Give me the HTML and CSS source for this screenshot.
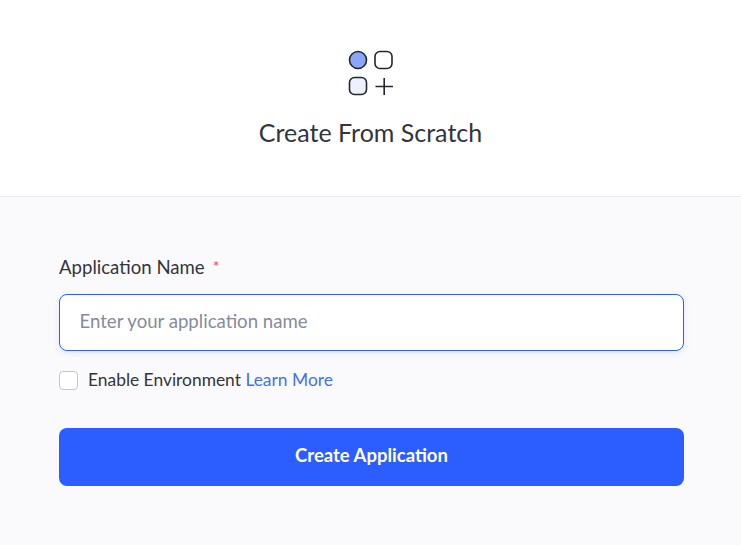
FILE: index.html
```html
<!DOCTYPE html>
<html lang="en">
<head>
<meta charset="utf-8">
<title>Create From Scratch</title>
<link rel="stylesheet" href="styles.css">
</head>
<body>
<header class="head">
  <svg class="logo" width="46" height="46" viewBox="0 0 46 46" aria-hidden="true">
    <circle cx="10" cy="10" r="8.5" fill="#8aa6fb" stroke="#25272d" stroke-width="1.6"/>
    <rect x="27" y="1.5" width="17" height="17" rx="5" fill="#fff" stroke="#25272d" stroke-width="1.6"/>
    <rect x="1.5" y="27.5" width="17" height="17" rx="5" fill="#eef1fd" stroke="#25272d" stroke-width="1.6"/>
    <path d="M27.5 36.5H45M36.2 28V45" fill="none" stroke="#25272d" stroke-width="1.6"/>
  </svg>
  <h1 class="title">Create From Scratch</h1>
</header>
<main class="form">
  <label class="label" for="app">Application Name<span class="req">*</span></label>
  <input class="input" id="app" type="text" placeholder="Enter your application name">
  <div class="check-row">
    <span class="box"></span>
    <span class="check-text">Enable Environment <a class="link" href="#">Learn More</a></span>
  </div>
  <button class="btn" type="button">Create Application</button>
</main>
</body>
</html>
```
FILE: styles.css
```css
* { box-sizing: border-box; }
html, body { margin: 0; height: 100%; }
body {
  font-family: Lato, "Open Sans", sans-serif;
  background: #fafafd;
  color: #33353b;
  overflow: hidden;
}
.head {
  height: 197px;
  background: #fff;
  border-bottom: 1px solid #ecedf1;
  padding-top: 50px;
  display: flex;
  flex-direction: column;
  align-items: center;
}
.logo { display: block; }
.title {
  margin: 20px 0 0;
  font-size: 25px;
  line-height: 32px;
  font-weight: 400;
}
.form {
  padding: 58px 57px 0 59px;
  display: flex;
  flex-direction: column;
}
.label {
  font-size: 18.6px;
  line-height: 24px;
}
.req {
  color: #f0433a;
  font-size: 16px;
  margin-left: 8px;
  position: relative;
  top: -2px;
}
.input {
  margin-top: 14px;
  height: 57px;
  border: 1px solid #2b5fff;
  border-radius: 8px;
  background: #fff;
  padding: 0 20px 3px 19.5px;
  font: 18.6px/24px Lato, sans-serif;
  color: #25272d;
  outline: none;
  box-shadow: 0 2px 6px rgba(43, 95, 255, .12);
}
.input::placeholder { color: #868b9c; opacity: 1; }
.check-row {
  margin-top: 19px;
  display: flex;
  align-items: center;
  gap: 10px;
  height: 20px;
}
.box {
  width: 19px;
  height: 19px;
  border: 1px solid #c4c6cc;
  border-radius: 4px;
  background: #fff;
}
.check-text { font-size: 17.4px; line-height: 20px; }
.link { color: #3f70fb; text-decoration: none; }
.btn {
  margin-top: 38px;
  height: 58px;
  border: 0;
  border-radius: 8px;
  background: #2c5dff;
  color: #fff;
  padding: 0 0 4px;
  font: 700 18.5px/24px Lato, sans-serif;
}
```
